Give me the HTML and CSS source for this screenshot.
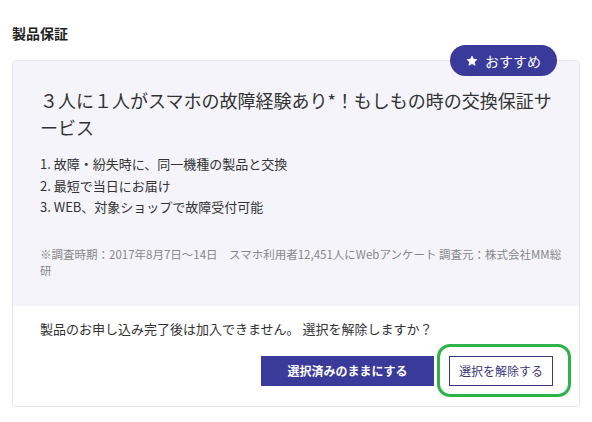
FILE: index.html
```html
<!DOCTYPE html>
<html lang="ja">
<head>
<meta charset="utf-8">
<link rel="stylesheet" href="styles.css">
</head>
<body>
<section class="page">
  <h2 class="heading">製品保証</h2>
  <div class="card">
    <span class="badge">
      <svg class="star" viewBox="0 0 24 24" width="12" height="12"><path d="M12 2.2l2.9 6.3 6.9.7-5.2 4.6 1.5 6.8L12 17.1l-6.1 3.5 1.5-6.8L2.2 9.2l6.9-.7z" fill="#fff" stroke="#fff" stroke-width="1.5" stroke-linejoin="round"/></svg>
      おすすめ
    </span>
    <div class="card-body">
      <p class="title">３人に１人がスマホの故障経験あり*！もしもの時の交換保証サービス</p>
      <ol class="features">
        <li>1. 故障・紛失時に、同一機種の製品と交換</li>
        <li>2. 最短で当日にお届け</li>
        <li>3. WEB、対象ショップで故障受付可能</li>
      </ol>
      <p class="note">※調査時期：2017年8月7日〜14日　スマホ利用者12,451人にWebアンケート 調査元：株式会社MM総研</p>
    </div>
    <div class="card-foot">
      <p class="question">製品のお申し込み完了後は加入できません。 選択を解除しますか？</p>
      <div class="actions">
        <button class="btn btn-primary">選択済みのままにする</button>
        <span class="highlight-wrap">
          <button class="btn btn-outline">選択を解除する</button>
          <span class="highlight"></span>
        </span>
      </div>
    </div>
  </div>
</section>
</body>
</html>
```
FILE: styles.css
```css
* { box-sizing: border-box; }
html, body { margin: 0; padding: 0; background: #fff; }
body {
  font-family: "Noto Sans CJK JP", "Noto Sans", sans-serif;
  color: #333;
}
.page { padding: 21px 12px 0 12px; width: 592px; }
.heading {
  margin: 0;
  font-size: 14px;
  line-height: 24px;
  font-weight: 700;
  color: #222;
}
.card {
  position: relative;
  margin-top: 15px;
  width: 568px;
  border: 1px solid #e4e4ea;
  border-radius: 4px;
  background: #fff;
}
.badge {
  position: absolute;
  top: -16px;
  right: 22px;
  height: 31px;
  width: 107px;
  border-radius: 16px;
  background: #3a3a9a;
  color: #fff;
  font-size: 14px;
  display: flex;
  align-items: center;
  gap: 7px;
  padding-left: 16px;
  line-height: 1;
}
.star { display: block; }
.card-body {
  background: #f4f4fa;
  padding: 26px 16px 28px 27px;
  border-radius: 4px 4px 0 0;
}
.title {
  margin: 0;
  font-size: 18px;
  line-height: 27px;
  color: #333;
}
.features {
  list-style: none;
  margin: 12px 0 0 0;
  padding: 0;
  font-size: 13px;
  line-height: 21.5px;
  color: #333;
}
.note {
  margin: 28px 0 0 0;
  font-size: 11.5px;
  line-height: 16px;
  color: #888;
  word-break: break-all;
}
.card-foot {
  padding: 13px 26px 20px 27px;
}
.question {
  margin: 0;
  font-size: 13px;
  line-height: 20px;
  color: #333;
}
.actions {
  margin-top: 17px;
  display: flex;
  justify-content: flex-end;
  gap: 15px;
}
.btn {
  height: 30px;
  font-family: inherit;
  font-size: 12px;
  padding: 0;
  border-radius: 0;
  cursor: pointer;
}
.btn-primary {
  width: 173px;
  background: #3a3a9a;
  color: #fff;
  font-weight: 700;
  border: 1px solid #3a3a9a;
}
.btn-outline {
  width: 104px;
  background: #fff;
  color: #3a3a7a;
  border: 1px solid #3a3a7a;
}
.highlight-wrap { position: relative; display: block; }
.highlight {
  position: absolute;
  left: -12px;
  top: -12px;
  right: -18px;
  bottom: -11px;
  border: 3px solid #2db34a;
  border-radius: 13px;
  pointer-events: none;
}
```
